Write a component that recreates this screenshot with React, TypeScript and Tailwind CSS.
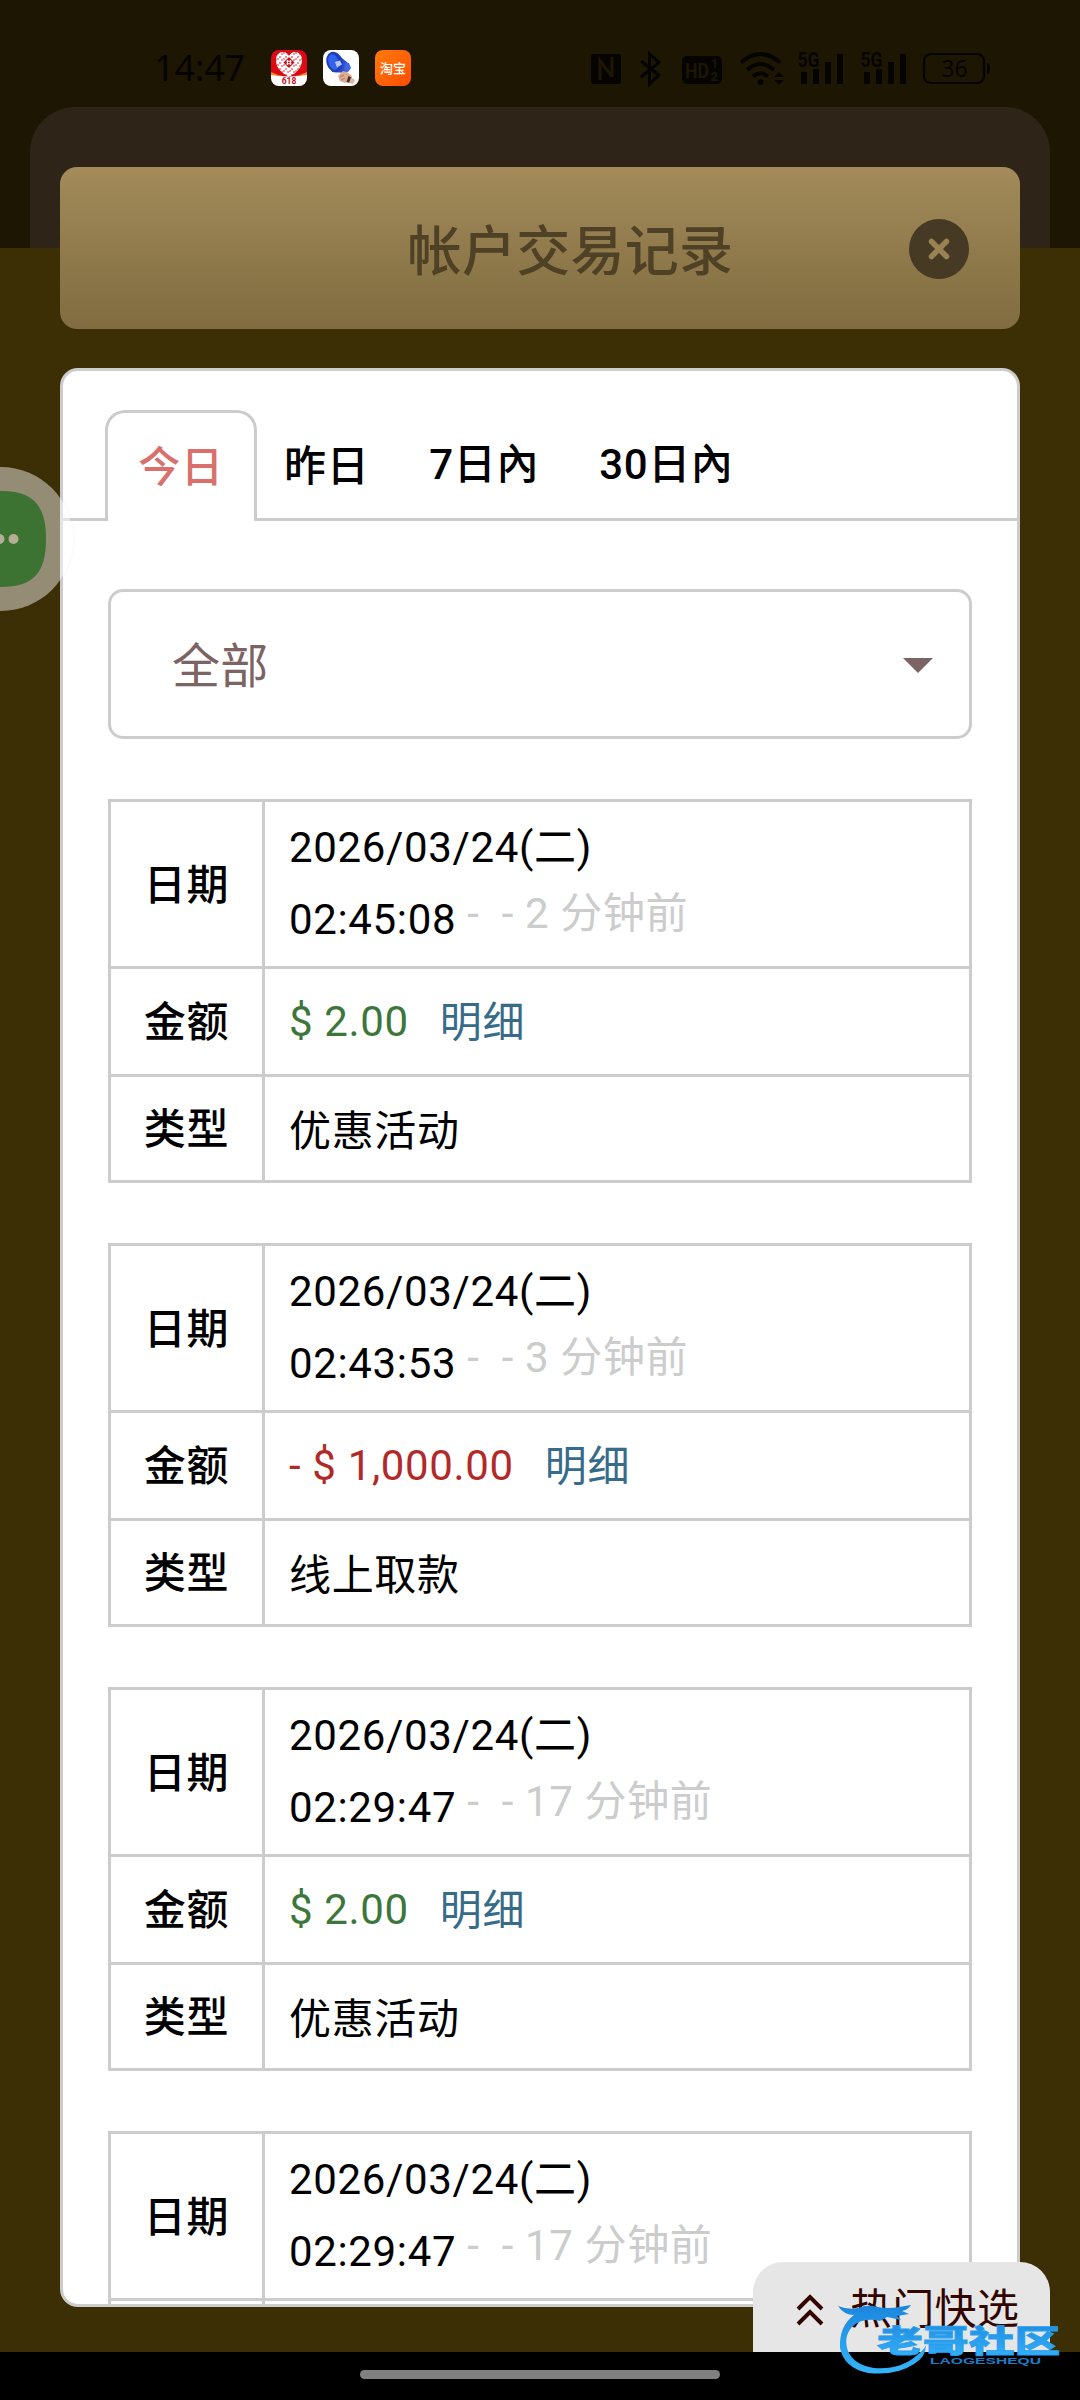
import React from 'react';

type RecordItem = {
  id: number;
  date: string;
  time: string;
  ago: string;
  amount: string;
  negative?: boolean;
  type: string;
};

const records: RecordItem[] = [
  { id: 1, date: '2026/03/24(二)', time: '02:45:08', ago: '2 分钟前', amount: '$ 2.00', type: '优惠活动' },
  { id: 2, date: '2026/03/24(二)', time: '02:43:53', ago: '3 分钟前', amount: '- $ 1,000.00', negative: true, type: '线上取款' },
  { id: 3, date: '2026/03/24(二)', time: '02:29:47', ago: '17 分钟前', amount: '$ 2.00', type: '优惠活动' },
  { id: 4, date: '2026/03/24(二)', time: '02:29:47', ago: '17 分钟前', amount: '$ 2.00', type: '优惠活动' },
];

const HeartAppIcon = () => (
  <svg viewBox="0 0 36 36" className="w-9 h-9">
    <defs>
      <clipPath id="heart-app">
        <rect width="36" height="36" rx="8" />
      </clipPath>
      <pattern id="heart-knit" width="6" height="6" patternUnits="userSpaceOnUse">
        <rect width="6" height="6" fill="#fff" />
        <path d="M0 3h2M3 0v2M4 4h2" stroke="#e3343a" strokeWidth="1.1" />
      </pattern>
    </defs>
    <g clipPath="url(#heart-app)">
      <rect width="36" height="36" fill="#dd0a14" />
      <path d="M0 24q18 5 36 0v12H0z" fill="#fff" />
      <path d="M0 22q6 3 12 4q-6 0-12-1zM36 22q-6 3-12 4q6 0 12-1z" fill="#f08a2c" />
      <path d="M18 27C9 22 5 17 5 10c0-5 3-8 7-8 3 0 5 2 6 4 1-2 3-4 6-4 4 0 7 3 7 8 0 7-4 12-13 17z" fill="url(#heart-knit)" />
      <path d="M18 7l5.500 5.500-5.500 5.500-5.500-5.500z" fill="#c9101c" />
      <path d="M16.500 10v5M19.500 10v5M15.500 11.200h5M15.500 13.800h5" stroke="#fff" strokeWidth="1.1" />
      <text x="18" y="34" textAnchor="middle" fontSize="8.500" fontWeight="700" fontFamily="Roboto, sans-serif" fill="#c3101a">
        618
      </text>
    </g>
  </svg>
);

const MegaphoneAppIcon = () => (
  <svg viewBox="0 0 36 36" className="w-9 h-9">
    <rect width="36" height="36" rx="8" fill="#fff" />
    <path d="M13 3L25 13l2 6-4 4-14-1z" fill="#2b50d8" />
    <ellipse cx="11.500" cy="12" rx="8" ry="10.500" transform="rotate(-18 11.500 12)" fill="#1d3fbe" />
    <ellipse cx="10.500" cy="12" rx="5" ry="8" transform="rotate(-18 10.500 12)" fill="#3263ea" />
    <path d="M12 12l5-1.500 2 4-5 3z" fill="#b9c6f3" />
    <path d="M22 13l4 0 2 5-3 4-4-2z" fill="#3f67e4" />
    <path d="M15 26l5-5 4 1 5 4-2 5-5 2-5-2z" fill="#e0ac90" />
    <path d="M17 27l4-2M18 30l4-2" stroke="#b07a60" strokeWidth="1" />
    <path d="M25.500 26l3 1.500-2 5.500-3-1z" fill="#3b3536" />
    <path d="M28 27.500l4 2.500-2 4-4-1z" fill="#e5b79d" />
  </svg>
);

const StatusIcons = () => (
  <svg viewBox="0 0 404 40" className="w-[404px] h-10 ml-[282px]" fill="#060401">
    {/* nfc */}
    <rect x="2" y="6" width="30" height="30" rx="3" />
    <path d="M11 32V13l12 15.500M23 9v20" fill="none" stroke="#1d1603" strokeWidth="3.200" />
    {/* bluetooth */}
    <path d="M52 13l18 14-9.500 9V6l9.500 8.500L52 29" fill="none" stroke="#060401" strokeWidth="3" />
    {/* HD */}
    <rect x="93" y="8" width="40" height="28" rx="5" />
    <g fill="#1d1603" fontFamily="Roboto, sans-serif" fontWeight="700">
      <text x="96" y="29.500" fontSize="21" textLength="24" lengthAdjust="spacingAndGlyphs">HD</text>
      <text x="122" y="20" fontSize="12">1</text>
      <text x="121.500" y="33" fontSize="13">2</text>
    </g>
    {/* wifi */}
    <g fill="none" stroke="#060401" strokeWidth="4">
      <path d="M152 14.500q19.500-17 39 0" />
      <path d="M158 22q13.500-12 27 0" />
      <path d="M164 28.500q7.500-6.500 15 0" />
    </g>
    <circle cx="171.500" cy="34" r="3" />
    <path d="M185 29l5-5 5 5zM185 32l5 5 5-5z" />
    {/* signal x2 */}
    {[0, 63].map((dx) => (
      <g key={dx} transform={`translate(${dx} 0)`}>
        <text x="208.500" y="19" fontSize="20" fontWeight="700" fontFamily="Roboto, sans-serif" textLength="22" lengthAdjust="spacingAndGlyphs">5G</text>
        <rect x="212" y="24" width="6" height="12" />
        <rect x="224" y="21" width="6" height="15" />
        <rect x="236" y="14" width="6" height="22" />
        <rect x="248" y="6" width="6" height="30" />
      </g>
    ))}
    {/* battery */}
    <rect x="335" y="6" width="60" height="29" rx="7" fill="none" stroke="#060401" strokeWidth="2.200" />
    <path d="M398 15q3 0 3 5.500t-3 5.500z" />
    <text x="365.500" y="28.500" textAnchor="middle" fontSize="23" fontFamily="'Noto Sans', sans-serif">36</text>
  </svg>
);

const StatusBar = () => (
  <div className="h-[107px] shrink-0 flex items-start pl-[154px] pt-12 tracking-normal">
    <span className="w-[117px] h-10 leading-10 text-[36px] tracking-[-0.2px] text-[#060401] font-['Noto_Sans',sans-serif]">14:47</span>
    <div className="flex gap-4 pt-0.5">
      <HeartAppIcon />
      <MegaphoneAppIcon />
      <div className="w-9 h-9 rounded-[8px] bg-linear-to-br from-[#ff7a0c] to-[#ff4a02] flex items-center justify-center text-white text-[13px] font-medium leading-none">
        淘宝
      </div>
    </div>
    <div className="-ml-[104px]">
      <StatusIcons />
    </div>
  </div>
);

const Header = () => (
  <div className="h-[162px] mt-[60px] mx-[60px] shrink-0 rounded-[17px] bg-linear-to-b from-[#a38b5a] to-[#806c40] flex items-center pl-[111px] pr-[51px] pt-0.5">
    <h1 className="flex-1 text-center text-[54px] tracking-[0.3px] font-medium text-[#4f4125] pl-[61px] pb-0.5 pt-2">帐户交易记录</h1>
    <button className="w-[60px] h-[60px] rounded-full bg-[#463a24] flex items-center justify-center">
      <svg viewBox="0 0 24 24" className="w-6 h-6" stroke="#9a8353" strokeWidth="5.500" strokeLinecap="round">
        <path d="M4.500 4.500l15 15M19.500 4.500l-15 15" />
      </svg>
    </button>
  </div>
);

const Tabs = () => (
  <div className="flex h-[111px] mt-[39px] shrink-0 font-medium leading-[60px]">
    <div className="w-[42px] border-b-[3px] border-[#ccc]" />
    <button className="w-[152px] border-[3px] border-b-0 border-[#ccc] rounded-t-[20px] text-[#d9706b] pt-0.5">今日</button>
    <div className="flex-1 flex items-center border-b-[3px] border-[#ccc] pl-[27px] gap-[60px]">
      <button className="pt-[5px]">昨日</button>
      <button className="pt-px">7日內</button>
      <button className="pt-px">30日內</button>
    </div>
  </div>
);

const Row: React.FC<{ label: string; className: string; children: React.ReactNode }> = ({ label, className, children }) => (
  <div className={`flex border-[#ccc] ${className}`}>
    <div className="w-[154px] border-r-[3px] border-[#ccc] flex items-center justify-center font-medium pt-0.5">{label}</div>
    <div className="flex-1 flex items-center pl-6">{children}</div>
  </div>
);

const RecordTable: React.FC<{ item: RecordItem }> = ({ item }) => (
  <div className="w-[864px] h-[384px] shrink-0 border-[3px] border-[#ccc]">
    <Row label="日期" className="h-[167px] border-b-[3px]">
      <div className="leading-[72px]">
        <div>{item.date}</div>
        <div className="h-[72px]">
          {item.time}{' '}
          <span className="text-[#ccc] leading-none align-[6px]">-&nbsp;&nbsp;- {item.ago}</span>
        </div>
      </div>
    </Row>
    <Row label="金额" className="h-[108px] border-b-[3px]">
      <span className={item.negative ? 'text-[#b12a2a]' : 'text-[#3c763a]'}>{item.amount}</span>
      <a className="ml-[31px] pt-0.5 text-[#376b8a]">明细</a>
    </Row>
    <Row label="类型" className="h-[103px]">
      <span className="pt-[5px]">{item.type}</span>
    </Row>
  </div>
);

const Watermark = () => (
  <svg viewBox="0 0 240 85" className="absolute left-[830px] top-[2295px] w-60 h-[85px] tracking-normal">
    <defs>
      <linearGradient id="wm" x1="0" y1="0" x2="0" y2="1">
        <stop offset="0" stopColor="#1b86dc" />
        <stop offset="1" stopColor="#35b4fb" />
      </linearGradient>
    </defs>
    <path
      d="M8 11q10 4 20 2 10-4 19-1 12 2 22 0l12-2q-3 5-9 6l7 3-12 2 4 4-14-3-7 4q-18-4-28 6-9 10-4 24 6 14 26 17 26 2 42-12 8-6 10-11 0 12-12 19-18 12-46 9-24-5-28-25-1-22 14-33-10 0-16-9z"
      fill="url(#wm)"
    />
    <g transform="translate(47 57) scale(1.480 1)">
      <text fontSize="31" fontWeight="900" fontFamily="'Noto Sans CJK SC', sans-serif" fill="url(#wm)" stroke="#2a9eee" strokeWidth="0.800">
        老哥社区
      </text>
    </g>
    <text x="100" y="69" fontSize="9.500" fontWeight="700" fontFamily="'Liberation Sans', sans-serif" fill="#1f7cc6" textLength="111" lengthAdjust="spacingAndGlyphs">
      LAOGESHEQU
    </text>
  </svg>
);

export default function App() {
  return (
    <div className="relative w-[1080px] h-[2400px] overflow-hidden flex flex-col bg-[#3d2f05] text-black text-[42px] tracking-[0.65px] font-['Roboto','Noto_Sans_CJK_SC',sans-serif]">
      {/* dimmed page behind the dialog */}
      <div className="absolute inset-x-0 top-0 h-[248px] bg-[#1d1603] pt-[107px] px-[30px]">
        <div className="h-full rounded-t-[45px] bg-[#2e2518]" />
      </div>

      <div className="relative flex flex-col">
        <StatusBar />
        <Header />

        <main className="h-[1939px] mt-[39px] mx-[60px] shrink-0 overflow-hidden rounded-[18px] border-[3px] border-[#ccc] bg-white flex flex-col">
          <Tabs />
          <div className="flex flex-col px-[45px] pt-[68px]">
            <button className="w-[864px] h-[150px] shrink-0 rounded-[15px] border-[3px] border-[#ccc] flex items-center justify-between pl-[61px] pr-9 text-[48px] tracking-[0.3px] text-[#7d6464]">
              <span className="pt-1.5">全部</span>
              <svg viewBox="0 0 30 15" className="w-[30px] h-[15px] mt-0.5" fill="#7d6464">
                <path d="M0 0h30L15 15z" />
              </svg>
            </button>
            <div className="flex flex-col gap-[60px] mt-[60px]">
              {records.map((item) => (
                <RecordTable key={item.id} item={item} />
              ))}
            </div>
          </div>
        </main>

        <div className="h-12 mt-[45px] shrink-0 bg-black flex justify-center pt-[18px]">
          <div className="w-[360px] h-[9px] rounded-full bg-[#808080]" />
        </div>
      </div>

      {/* chat bubble */}
      <div className="absolute -left-[71px] top-[467px] w-36 h-36 rounded-full bg-white/45 shadow-[0_0_4px_rgba(0,0,0,0.05)] flex items-center justify-center">
        <svg viewBox="0 0 96 96" className="w-24 h-24">
          <path d="M48 0C80 0 93 14 93 48S80 96 48 96 3 82 3 48 16 0 48 0z" fill="#3c7332" />
          <g fill="#b5ad94">
            <circle cx="32" cy="48" r="5" />
            <circle cx="46.500" cy="48" r="5" />
            <circle cx="60.500" cy="48" r="5" />
          </g>
        </svg>
      </div>

      {/* quick menu */}
      <button className="absolute left-[753px] top-[2262px] w-[297px] h-[90px] rounded-t-[30px] bg-[#e6e6e6] text-[#330500] flex items-center pl-[43px]">
        <svg viewBox="0 0 28 34" className="w-7 h-[34px] mr-[26px] mt-1.5" fill="none" stroke="#330500" strokeWidth="4">
          <path d="M2 16L14 4l12 12M2 31L14 19l12 12" />
        </svg>
        <span className="tracking-[0.3px] pt-1">热门快选</span>
      </button>

      <Watermark />
    </div>
  );
}
